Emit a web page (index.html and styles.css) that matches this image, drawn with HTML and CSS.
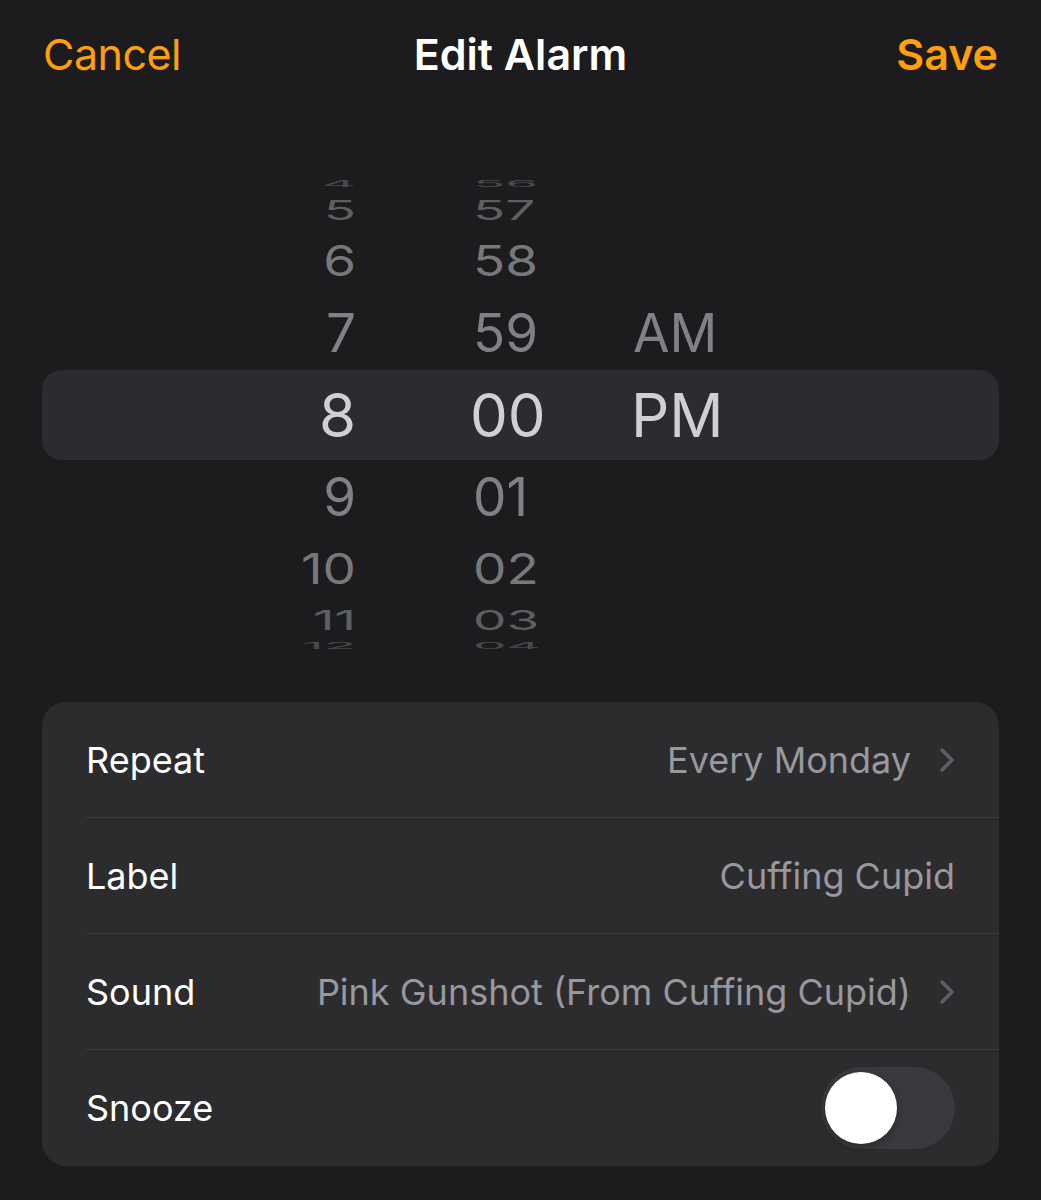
FILE: index.html
```html
<!DOCTYPE html>
<html>
<head>
    <title>Edit Alarm</title>
    <link rel="stylesheet" href="styles.css">
</head>
<body>
    <div class="header">
        <span class="nav-btn cancel">Cancel</span>
        <span class="title">Edit Alarm</span>
        <span class="nav-btn save">Save</span>
    </div>

    <div class="picker">
        <div class="prow r-far"><span class="hour">4</span><span class="minute">56</span><span class="ampm"></span></div>
        <div class="prow r-edge"><span class="hour">5</span><span class="minute">57</span><span class="ampm"></span></div>
        <div class="prow r-near"><span class="hour">6</span><span class="minute">58</span><span class="ampm"></span></div>
        <div class="prow r-adj"><span class="hour">7</span><span class="minute">59</span><span class="ampm">AM</span></div>
        <div class="prow r-sel"><span class="hour">8</span><span class="minute">00</span><span class="ampm">PM</span></div>
        <div class="prow r-adj"><span class="hour">9</span><span class="minute">01</span><span class="ampm"></span></div>
        <div class="prow r-near"><span class="hour">10</span><span class="minute">02</span><span class="ampm"></span></div>
        <div class="prow r-edge"><span class="hour">11</span><span class="minute">03</span><span class="ampm"></span></div>
        <div class="prow r-far"><span class="hour">12</span><span class="minute">04</span><span class="ampm"></span></div>
    </div>

    <div class="settings">
        <div class="row">
            <span class="row-label">Repeat</span>
            <span class="row-value">Every Monday</span>
            <svg class="chevron" width="16" height="26" viewBox="0 0 16 26"><polyline points="3,3 13,13 3,23" fill="none" stroke="#5e5e62" stroke-width="3.5" stroke-linecap="round" stroke-linejoin="round"/></svg>
        </div>
        <div class="row">
            <span class="row-label">Label</span>
            <span class="row-value">Cuffing Cupid</span>
        </div>
        <div class="row">
            <span class="row-label">Sound</span>
            <span class="row-value">Pink Gunshot (From Cuffing Cupid)</span>
            <svg class="chevron" width="16" height="26" viewBox="0 0 16 26"><polyline points="3,3 13,13 3,23" fill="none" stroke="#5e5e62" stroke-width="3.5" stroke-linecap="round" stroke-linejoin="round"/></svg>
        </div>
        <div class="row">
            <span class="row-label">Snooze</span>
            <div class="toggle"><div class="knob"></div></div>
        </div>
    </div>
</body>
</html>
```

FILE: styles.css
```css
body {
    font-family: Inter, 'Noto Sans', sans-serif;
    background-color: #1c1c1e;
    color: #fff;
    margin: 0;
    width: 1041px;
}

.header {
    display: grid;
    grid-template-columns: 1fr auto 1fr;
    align-items: center;
    height: 108px;
    padding: 0 43px 0 43px;
}

.nav-btn {
    font-size: 43px;
    color: #ff9f0a;
}

.cancel {
    justify-self: start;
    letter-spacing: -0.5px;
}

.save {
    justify-self: end;
    font-weight: 600;
}

.title {
    font-size: 43px;
    font-weight: 600;
    color: #fff;
}

/* time wheel */
.picker {
    margin: 66px 42px 0 42px;
}

.prow {
    display: flex;
    align-items: center;
    font-size: 53px;
    color: #818185;
}

.prow span {
    display: block;
    line-height: 1;
}

.hour {
    width: 314px;
    text-align: right;
}

.minute {
    width: 277px;
    padding-left: 117px;
    box-sizing: border-box;
}

.ampm {
    flex: 1;
}

.r-sel {
    height: 90px;
    background-color: #2c2c30;
    border-radius: 20px;
    font-size: 60px;
    color: #d0d0d4;
}

.r-sel .minute {
    padding-left: 114px;
}

.r-sel .ampm {
    margin-left: -2px;
}

.r-adj {
    height: 74px;
}

.r-near {
    height: 70px;
}

.r-near span {
    transform: scaleY(0.8);
    color: #78787b;
}

.r-edge {
    height: 32px;
}

.r-edge span {
    transform: scaleY(0.52);
    color: #5f5f62;
}

.r-far {
    height: 20px;
}

.r-far span {
    transform: scaleY(0.16);
    color: #4a4a4d;
}

/* settings list */
.settings {
    margin: 46px 42px 0 42px;
    background-color: #2c2c2e;
    border-radius: 24px;
}

.row {
    display: flex;
    align-items: center;
    height: 116px;
    margin-left: 44px;
    padding-right: 44px;
    border-bottom: 1px solid #3d3d41;
    box-sizing: border-box;
}

.row:last-child {
    border-bottom: none;
}

.row-label {
    font-size: 36px;
    color: #fff;
}

.row-value {
    margin-left: auto;
    font-size: 36px;
    color: #98989e;
}

.chevron {
    margin-left: 28px;
}

.toggle {
    margin-left: auto;
    width: 134px;
    height: 82px;
    box-sizing: border-box;
    padding: 5px 4px;
    border-radius: 41px;
    background-color: #3a3a3e;
}

.knob {
    width: 72px;
    height: 72px;
    border-radius: 50%;
    background-color: #fff;
    box-shadow: 0 3px 8px rgba(0, 0, 0, 0.3);
}
```
